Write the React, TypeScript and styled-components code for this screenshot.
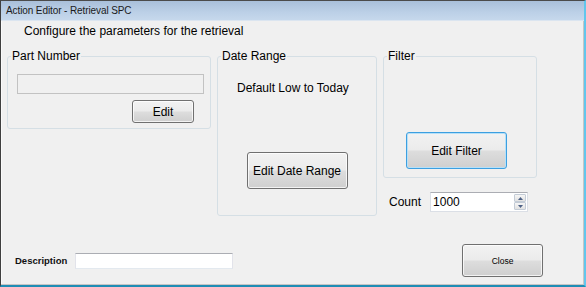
import styled, { createGlobalStyle } from "styled-components";

const GlobalStyle = createGlobalStyle`
  html, body {
    margin: 0;
    padding: 0;
    background: #f0f0f0;
  }
  body {
    font-family: "Liberation Sans", Arial, sans-serif;
    color: #000;
  }
`;

const Window = styled.div`
  width: 586px;
  height: 287px;
  box-sizing: border-box;
  display: flex;
  flex-direction: column;
  background: #f0f0f0;
  border-left: 1px solid #3f3f3f;
  border-top: 1px solid #4b4b4b;
  border-right: 2px solid #62c6ec;
  border-bottom: 2px solid #1f8db5;
  overflow: hidden;
`;

const TitleBar = styled.div`
  flex: none;
  height: 19px;
  display: flex;
  align-items: center;
  padding-left: 5px;
  background: linear-gradient(180deg, #a9bfda 0%, #bcd0e7 60%, #c6d8ec 100%);
  border-bottom: 1px solid #dbe5f0;
  font-size: 10px;
  letter-spacing: -0.1px;
  color: #1a1a1a;
`;

const Body = styled.div`
  flex: 1;
  display: flex;
  flex-direction: column;
  border-right: 1px solid #c6c6c6;
  border-bottom: 1px solid #c6c6c6;
  box-shadow: inset 1px 0 0 #fafafa;
`;

const Heading = styled.div`
  margin: 3px 0 0 23px;
  font-size: 12px;
  line-height: 14px;
`;

const GroupsRow = styled.div`
  display: flex;
  align-items: flex-start;
  gap: 6px;
  margin-top: 11px;
  padding-left: 6px;
`;

const GroupBox = styled.fieldset<{ $w: number; $h: number }>`
  margin: 0;
  padding: 0;
  min-width: 0;
  box-sizing: border-box;
  width: ${(p) => p.$w}px;
  height: ${(p) => p.$h}px;
  border: 1px solid #d5dfe5;
  border-radius: 3px;
`;

const GroupLabel = styled.legend`
  margin-left: 3px;
  padding: 0 1px;
  font-size: 12px;
  line-height: 14px;
`;

const PartInner = styled.div`
  display: flex;
  flex-direction: column;
  width: 187px;
  padding: 11px 0 0 9px;
`;

const TextBox = styled.div<{ $w: number; $h: number; $disabled?: boolean }>`
  box-sizing: border-box;
  width: ${(p) => p.$w}px;
  height: ${(p) => p.$h}px;
  background: ${(p) => (p.$disabled ? "#f0f0f0" : "#fff")};
  border: 1px solid #dbdfe6;
  border-top-color: #abadb3;
  border-left-color: #e2e3ea;
  border-right-color: #e2e3ea;
  border-bottom-color: #e3e9ef;
  ${(p) => p.$disabled && "border-color: #c2c2c2;"}
  font-size: 12px;
  line-height: ${(p) => p.$h - 2}px;
  padding-left: 2px;
`;

const Button = styled.div<{ $w: number; $h: number; $focus?: boolean; $small?: boolean }>`
  box-sizing: border-box;
  width: ${(p) => p.$w}px;
  height: ${(p) => p.$h}px;
  display: flex;
  align-items: center;
  justify-content: center;
  border: 1px solid ${(p) => (p.$focus ? "#3c9fe0" : "#707070")};
  border-radius: 3px;
  background: linear-gradient(180deg, #f2f2f2 0%, #ebebeb 48%, #dddddd 52%, #cfcfcf 100%);
  box-shadow: inset 0 0 0 1px ${(p) => (p.$focus ? "#b6e0f8" : "rgba(255, 255, 255, 0.75)")};
  font-size: ${(p) => (p.$small ? "8.5px" : "12px")};
  color: #000;
`;

const EditButton = styled(Button)`
  align-self: flex-end;
  margin: 6px 10px 0 0;
`;

const DateInner = styled.div`
  display: flex;
  flex-direction: column;
  padding-top: 18px;
`;

const InfoText = styled.div`
  padding-left: 19px;
  font-size: 12px;
  line-height: 14px;
`;

const DateButton = styled(Button)`
  align-self: center;
  margin-top: 57px;
`;

const RightColumn = styled.div`
  display: flex;
  flex-direction: column;
`;

const FilterInner = styled.div`
  padding: 69px 0 0 22px;
`;

const CountRow = styled.div`
  display: flex;
  align-items: center;
  gap: 9px;
  margin: 14px 0 0 6px;
  font-size: 12px;
`;

const NumericBox = styled.div`
  box-sizing: border-box;
  width: 98px;
  height: 20px;
  display: flex;
  align-items: center;
  justify-content: space-between;
  background: #fff;
  border: 1px solid #dbdfe6;
  border-top-color: #abadb3;
  padding: 0 1px 0 2px;
  font-size: 12px;
`;

const Spinner = styled.div`
  display: flex;
  flex-direction: column;
  gap: 0;
  height: 16px;
`;

const SpinButton = styled.div`
  box-sizing: border-box;
  width: 12px;
  height: 8px;
  display: flex;
  align-items: center;
  justify-content: center;
  border: 1px solid #c4ccd6;
  border-radius: 1px;
  background: linear-gradient(180deg, #f6f6f6, #e2e2e2);
`;

const BottomRow = styled.div`
  display: flex;
  align-items: center;
  margin-top: 28px;
  padding-left: 14px;
`;

const DescLabel = styled.div`
  font-size: 9.5px;
  font-weight: bold;
  width: 51px;
  margin-right: 9px;
  color: #111;
`;

const CloseButton = styled(Button)`
  margin: 0 40px 0 auto;
`;

function Arrow({ up }: { up?: boolean }) {
  return (
    <svg width="5" height="3" viewBox="0 0 5 3">
      <path d={up ? "M0 3 L2.5 0 L5 3 Z" : "M0 0 L2.5 3 L5 0 Z"} fill="#4d6185" />
    </svg>
  );
}

export default function App() {
  return (
    <>
      <GlobalStyle />
      <Window>
        <TitleBar>Action Editor - Retrieval SPC</TitleBar>
        <Body>
          <Heading>Configure the parameters for the retrieval</Heading>

          <GroupsRow>
            <GroupBox $w={204} $h={80}>
              <GroupLabel>Part Number</GroupLabel>
              <PartInner>
                <TextBox $w={187} $h={20} $disabled />
                <EditButton $w={62} $h={23}>Edit</EditButton>
              </PartInner>
            </GroupBox>

            <GroupBox $w={160} $h={167}>
              <GroupLabel>Date Range</GroupLabel>
              <DateInner>
                <InfoText>Default Low to Today</InfoText>
                <DateButton $w={101} $h={37}>Edit Date Range</DateButton>
              </DateInner>
            </GroupBox>

            <RightColumn>
              <GroupBox $w={154} $h={129}>
                <GroupLabel>Filter</GroupLabel>
                <FilterInner>
                  <Button $w={101} $h={37} $focus>Edit Filter</Button>
                </FilterInner>
              </GroupBox>
              <CountRow>
                <span>Count</span>
                <NumericBox>
                  <span>1000</span>
                  <Spinner>
                    <SpinButton><Arrow up /></SpinButton>
                    <SpinButton><Arrow /></SpinButton>
                  </Spinner>
                </NumericBox>
              </CountRow>
            </RightColumn>
          </GroupsRow>

          <BottomRow>
            <DescLabel>Description</DescLabel>
            <TextBox $w={158} $h={16} />
            <CloseButton $w={81} $h={33} $small>Close</CloseButton>
          </BottomRow>
        </Body>
      </Window>
    </>
  );
}
